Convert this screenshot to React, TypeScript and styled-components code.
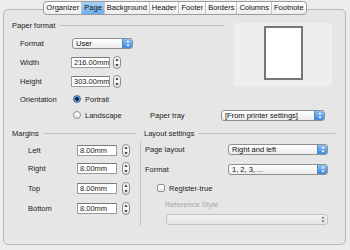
import React from "react";
import styled, { createGlobalStyle } from "styled-components";

const Global = createGlobalStyle`
  html, body { margin: 0; padding: 0; background: #ececec; }
  body { font-family: "Liberation Sans", Arial, sans-serif; font-size: 7.5px; color: #1c1c1c; }
`;

const Root = styled.div`
  width: 350px;
  height: 250px;
  overflow: hidden;
  background: #ececec;
  display: flex;
  flex-direction: column;
`;

const TabBar = styled.div`
  position: relative;
  z-index: 1;
  align-self: center;
  margin-top: 1px;
  height: 12px;
  display: flex;
  border: 1px solid #9c9c9c;
  border-radius: 4px;
  background: linear-gradient(#ffffff, #ededed);
  overflow: hidden;
`;

const Tab = styled.div<{ $active?: boolean }>`
  display: flex;
  align-items: center;
  padding: 0 2px;
  font-size: 7.5px;
  line-height: 12px;
  color: #111;
  background: ${(p) => (p.$active ? "linear-gradient(#a9d1f7, #6aaef0)" : "transparent")};
  border-left: 1px solid #c4c4c4;
  &:first-child { border-left: none; }
`;

const Panel = styled.div`
  margin: -6px 4px 0 3px;
  height: 236px;
  box-sizing: border-box;
  border: 1px solid #b7b7b7;
  border-radius: 5px;
  background: #e6e6e6;
  padding: 10px 8px 0 8px;
  display: flex;
  flex-direction: column;
`;

const TopSection = styled.div`
  display: grid;
  grid-template-columns: 217px 1fr;
`;

const Column = styled.div`
  display: flex;
  flex-direction: column;
`;

const SectionHeader = styled.div<{ $indent?: number; $pr?: number }>`
  display: flex;
  align-items: center;
  gap: 4px;
  height: 10px;
  padding-left: ${(p) => p.$indent ?? 0}px;
  padding-right: ${(p) => p.$pr ?? 0}px;
  white-space: nowrap;
  &::after {
    content: "";
    flex: 1;
    height: 1px;
    background: #c2c2c2;
  }
`;

const Row = styled.div<{ $h: number; $indent?: number; $mt?: number }>`
  display: flex;
  align-items: center;
  height: ${(p) => p.$h}px;
  padding-left: ${(p) => p.$indent ?? 0}px;
  margin-top: ${(p) => p.$mt ?? 0}px;
  white-space: nowrap;
`;

const Label = styled.span<{ $w: number; $muted?: boolean }>`
  display: inline-block;
  width: ${(p) => p.$w}px;
  flex: none;
  color: ${(p) => (p.$muted ? "#a6a6a6" : "#1c1c1c")};
`;

const Preview = styled.div`
  margin: 3px 5px 0 5px;
  height: 63px;
  background: #eeeeee;
  display: flex;
  justify-content: center;
  align-items: flex-start;
`;

const PageRect = styled.div`
  margin-top: 3px;
  width: 35px;
  height: 50px;
  border: 2px solid #777;
  background: #fff;
`;

const TextInput = styled.div<{ $w: number }>`
  width: ${(p) => p.$w}px;
  height: 11px;
  box-sizing: border-box;
  border: 1px solid #9a9a9a;
  border-top-color: #7b7b7b;
  background: #fff;
  padding-left: 2px;
  line-height: 9px;
  font-size: 7.5px;
  flex: none;
  overflow: hidden;
`;

const SpinBox = styled.div<{ $ml: number }>`
  margin-left: ${(p) => p.$ml}px;
  width: 8px;
  height: 13px;
  box-sizing: border-box;
  border: 1px solid #8c8c8c;
  border-radius: 4px;
  background: linear-gradient(#ffffff, #eaeaea);
  display: flex;
  align-items: center;
  justify-content: center;
  flex: none;
`;

const Spinner = ({ ml }: { ml: number }) => (
  <SpinBox $ml={ml}>
    <svg width="4" height="9" viewBox="0 0 4 9">
      <path d="M2 0.5 L3.6 2.8 L0.4 2.8 Z" fill="#222" />
      <path d="M2 8.5 L3.6 6.2 L0.4 6.2 Z" fill="#222" />
    </svg>
  </SpinBox>
);

const SelectBox = styled.div<{ $w: number; $disabled?: boolean }>`
  width: ${(p) => p.$w}px;
  height: 11px;
  box-sizing: border-box;
  border: 1px solid ${(p) => (p.$disabled ? "#c3c3c3" : "#8f8f8f")};
  border-radius: 3px;
  background: ${(p) => (p.$disabled ? "linear-gradient(#f2f2f2, #e6e6e6)" : "linear-gradient(#ffffff, #ececec)")};
  display: flex;
  align-items: center;
  overflow: hidden;
  flex: none;
`;

const SelectText = styled.span`
  flex: 1;
  padding-left: 3px;
  line-height: 9px;
  font-size: 7.5px;
  color: #111;
`;

const Stepper = styled.span<{ $disabled?: boolean }>`
  width: 9px;
  height: 100%;
  display: flex;
  align-items: center;
  justify-content: center;
  background: ${(p) => (p.$disabled ? "transparent" : "linear-gradient(#8ec0f4, #3b84de)")};
  border-left: 1px solid ${(p) => (p.$disabled ? "transparent" : "#5a86c0")};
`;

const Select = ({ w, text, disabled }: { w: number; text?: string; disabled?: boolean }) => (
  <SelectBox $w={w} $disabled={disabled}>
    <SelectText>{text}</SelectText>
    <Stepper $disabled={disabled}>
      <svg width="4" height="7" viewBox="0 0 4 7">
        <path d="M2 0.3 L3.7 2.6 L0.3 2.6 Z" fill={disabled ? "#777" : "#fff"} />
        <path d="M2 6.7 L3.7 4.4 L0.3 4.4 Z" fill={disabled ? "#777" : "#fff"} />
      </svg>
    </Stepper>
  </SelectBox>
);

const RadioCircle = styled.span<{ $on?: boolean }>`
  width: 8px;
  height: 8px;
  box-sizing: border-box;
  border-radius: 50%;
  border: 1px solid ${(p) => (p.$on ? "#3f6fa8" : "#8e8e8e")};
  background: ${(p) => (p.$on ? "radial-gradient(circle, #1d2a3a 0 1.6px, #6aa7ea 2.2px, #3d7ed2 100%)" : "linear-gradient(#ffffff, #e6e6e6)")};
  margin: 0 4px 0 2px;
  flex: none;
`;

const RadioOption = styled.span<{ $w: number }>`
  display: inline-flex;
  align-items: center;
  width: ${(p) => p.$w}px;
  flex: none;
`;

const CheckBox = styled.span`
  width: 8px;
  height: 8px;
  box-sizing: border-box;
  border: 1px solid #939393;
  border-radius: 2px;
  background: linear-gradient(#ffffff, #e8e8e8);
  margin-right: 4px;
  flex: none;
`;

const BottomSection = styled.div`
  margin-top: 6px;
  display: grid;
  grid-template-columns: 128px 1px 1fr;
`;

const Separator = styled.div`
  margin-top: 13px;
  height: 85px;
  background: #c4c4c4;
`;

export default function App() {
  return (
    <Root>
      <Global />
      <TabBar>
        {["Organizer", "Page", "Background", "Header", "Footer", "Borders", "Columns", "Footnote"].map((t) => (
          <Tab key={t} $active={t === "Page"}>
            {t}
          </Tab>
        ))}
      </TabBar>
      <Panel>
        <TopSection>
          <Column>
            <SectionHeader $pr={4}>Paper format</SectionHeader>
            <Row $h={18} $indent={8} $mt={4}>
              <Label $w={52}>Format</Label>
              <Select w={61} text="User" />
            </Row>
            <Row $h={20} $indent={8}>
              <Label $w={51}>Width</Label>
              <TextInput $w={39}>216.00mm</TextInput>
              <Spinner ml={3} />
            </Row>
            <Row $h={18} $indent={8}>
              <Label $w={51}>Height</Label>
              <TextInput $w={39}>303.00mm</TextInput>
              <Spinner ml={3} />
            </Row>
            <Row $h={18} $indent={8}>
              <Label $w={51}>Orientation</Label>
              <RadioOption $w={77}>
                <RadioCircle $on />
                Portrait
              </RadioOption>
            </Row>
          </Column>
          <Preview>
            <PageRect />
          </Preview>
        </TopSection>
        <Row $h={14} $indent={59}>
          <RadioOption $w={79}>
            <RadioCircle />
            Landscape
          </RadioOption>
          <Label $w={71}>Paper tray</Label>
          <Select w={104} text="[From printer settings]" />
        </Row>
        <BottomSection>
          <Column>
            <SectionHeader $pr={4}>Margins</SectionHeader>
            <Row $h={18} $indent={16} $mt={3}>
              <Label $w={49}>Left</Label>
              <TextInput $w={40}>8.00mm</TextInput>
              <Spinner ml={5} />
            </Row>
            <Row $h={19} $indent={16}>
              <Label $w={49}>Right</Label>
              <TextInput $w={40}>8.00mm</TextInput>
              <Spinner ml={5} />
            </Row>
            <Row $h={20} $indent={16}>
              <Label $w={49}>Top</Label>
              <TextInput $w={40}>8.00mm</TextInput>
              <Spinner ml={5} />
            </Row>
            <Row $h={20} $indent={16}>
              <Label $w={49}>Bottom</Label>
              <TextInput $w={40}>8.00mm</TextInput>
              <Spinner ml={5} />
            </Row>
          </Column>
          <Separator />
          <Column>
            <SectionHeader $indent={3} $pr={2}>Layout settings</SectionHeader>
            <Row $h={20} $indent={4} $mt={1}>
              <Label $w={83}>Page layout</Label>
              <Select w={100} text="Right and left" />
            </Row>
            <Row $h={20} $indent={4}>
              <Label $w={83}>Format</Label>
              <Select w={100} text="1, 2, 3, ..." />
            </Row>
            <Row $h={18} $indent={16}>
              <CheckBox />
              Register-true
            </Row>
            <Row $h={14} $indent={24}>
              <Label $w={100} $muted>
                Reference Style
              </Label>
            </Row>
            <Row $h={12} $indent={25} $mt={2}>
              <Select w={162} disabled />
            </Row>
          </Column>
        </BottomSection>
      </Panel>
    </Root>
  );
}
